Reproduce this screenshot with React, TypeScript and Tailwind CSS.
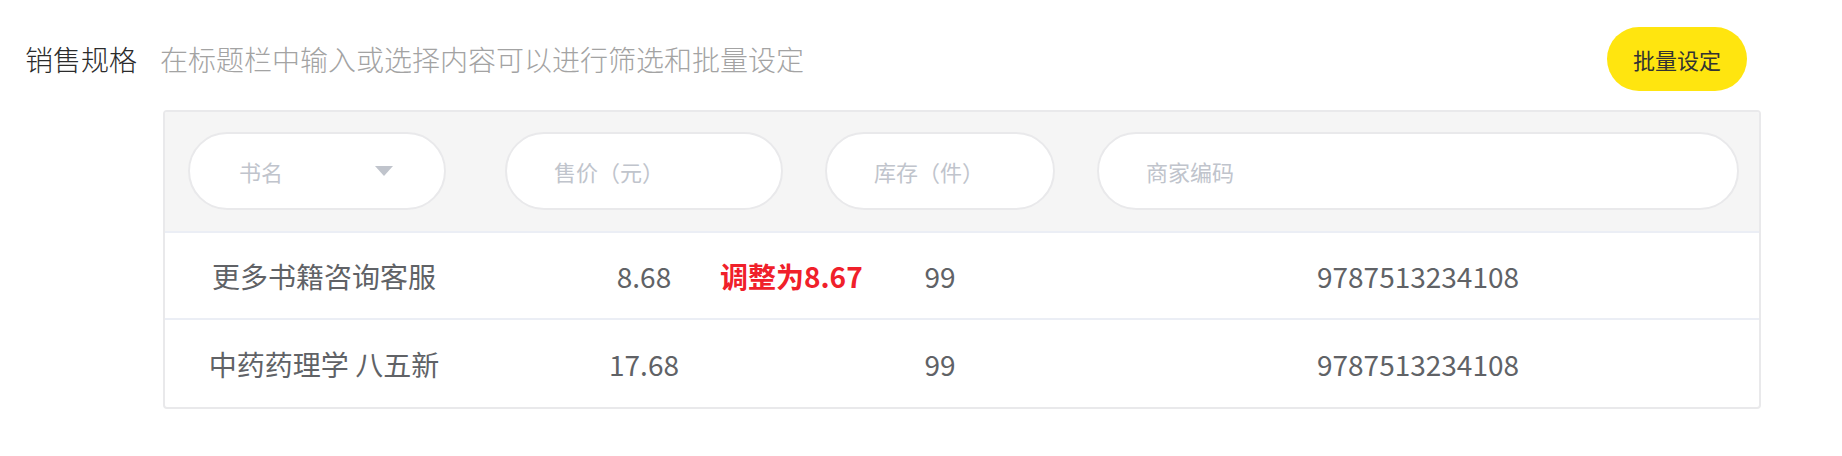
import React from "react";

const cjk = { fontFamily: '"Noto Sans CJK SC", "Noto Sans", sans-serif' };

function Pill({ w, children }: { w: string; children: React.ReactNode }) {
  return (
    <div
      className={`${w} h-[78px] shrink-0 rounded-full border-2 border-[#e9e9eb] bg-white flex items-center pl-[47px] text-[22px] leading-none text-[#c0c4cc]`}
    >
      {children}
    </div>
  );
}

export default function App() {
  return (
    <div className="w-[1842px] h-[456px] bg-white" style={cjk}>
      <div className="flex items-center pt-[27px] pl-[25px] pr-[95px]">
        <span className="text-[28px] leading-none font-light text-[#2b2b2b]">销售规格</span>
        <span className="ml-[23px] text-[28px] leading-none font-light text-[#a3a3a3]">
          在标题栏中输入或选择内容可以进行筛选和批量设定
        </span>
        <button className="ml-auto w-[140px] h-[64px] rounded-full bg-[#ffe50f] text-[22px] leading-none text-[#333333]">
          批量设定
        </button>
      </div>

      <div className="ml-[163px] mt-[19px] w-[1598px] border-2 border-[#e9e9eb] rounded-[4px] overflow-hidden">
        <div className="bg-[#f5f5f5] flex pl-[23px] pr-[20px] pt-[20px] pb-[21px] border-b-2 border-[#ebeef5]">
          <Pill w="w-[258px]">
            <span className="pl-[2px]">书名</span>
            <svg className="ml-[92px]" width="18" height="10" viewBox="0 0 18 10">
              <polygon points="0,0 18,0 9,10" fill="#c0c4cc" />
            </svg>
          </Pill>
          <div className="w-[59px] shrink-0" />
          <Pill w="w-[278px]">售价（元）</Pill>
          <div className="w-[42px] shrink-0" />
          <Pill w="w-[230px]">库存（件）</Pill>
          <div className="w-[42px] shrink-0" />
          <Pill w="w-[642px]">商家编码</Pill>
        </div>

        {[
          { name: "更多书籍咨询客服", price: "8.68", adj: "调整为8.67", stock: "99", code: "9787513234108" },
          { name: "中药药理学 八五新", price: "17.68", adj: "", stock: "99", code: "9787513234108" },
        ].map((r, i) => (
          <div
            key={i}
            className={`flex items-center h-[87px] pl-[23px] pr-[20px] text-[28px] leading-none text-[#606266] ${
              i === 0 ? "border-b-2 border-[#ebeef5]" : ""
            }`}
          >
            <div className="w-[258px] shrink-0 text-center pl-[14px]">{r.name}</div>
            <div className="w-[59px] shrink-0" />
            <div className="w-[278px] shrink-0 text-center relative">
              {r.price}
              {r.adj && (
                <span className="absolute left-[215px] top-0 whitespace-nowrap font-bold text-[#f0202a]">
                  {r.adj}
                </span>
              )}
            </div>
            <div className="w-[42px] shrink-0" />
            <div className="w-[230px] shrink-0 text-center">{r.stock}</div>
            <div className="w-[42px] shrink-0" />
            <div className="w-[642px] shrink-0 text-center">{r.code}</div>
          </div>
        ))}
      </div>
    </div>
  );
}
